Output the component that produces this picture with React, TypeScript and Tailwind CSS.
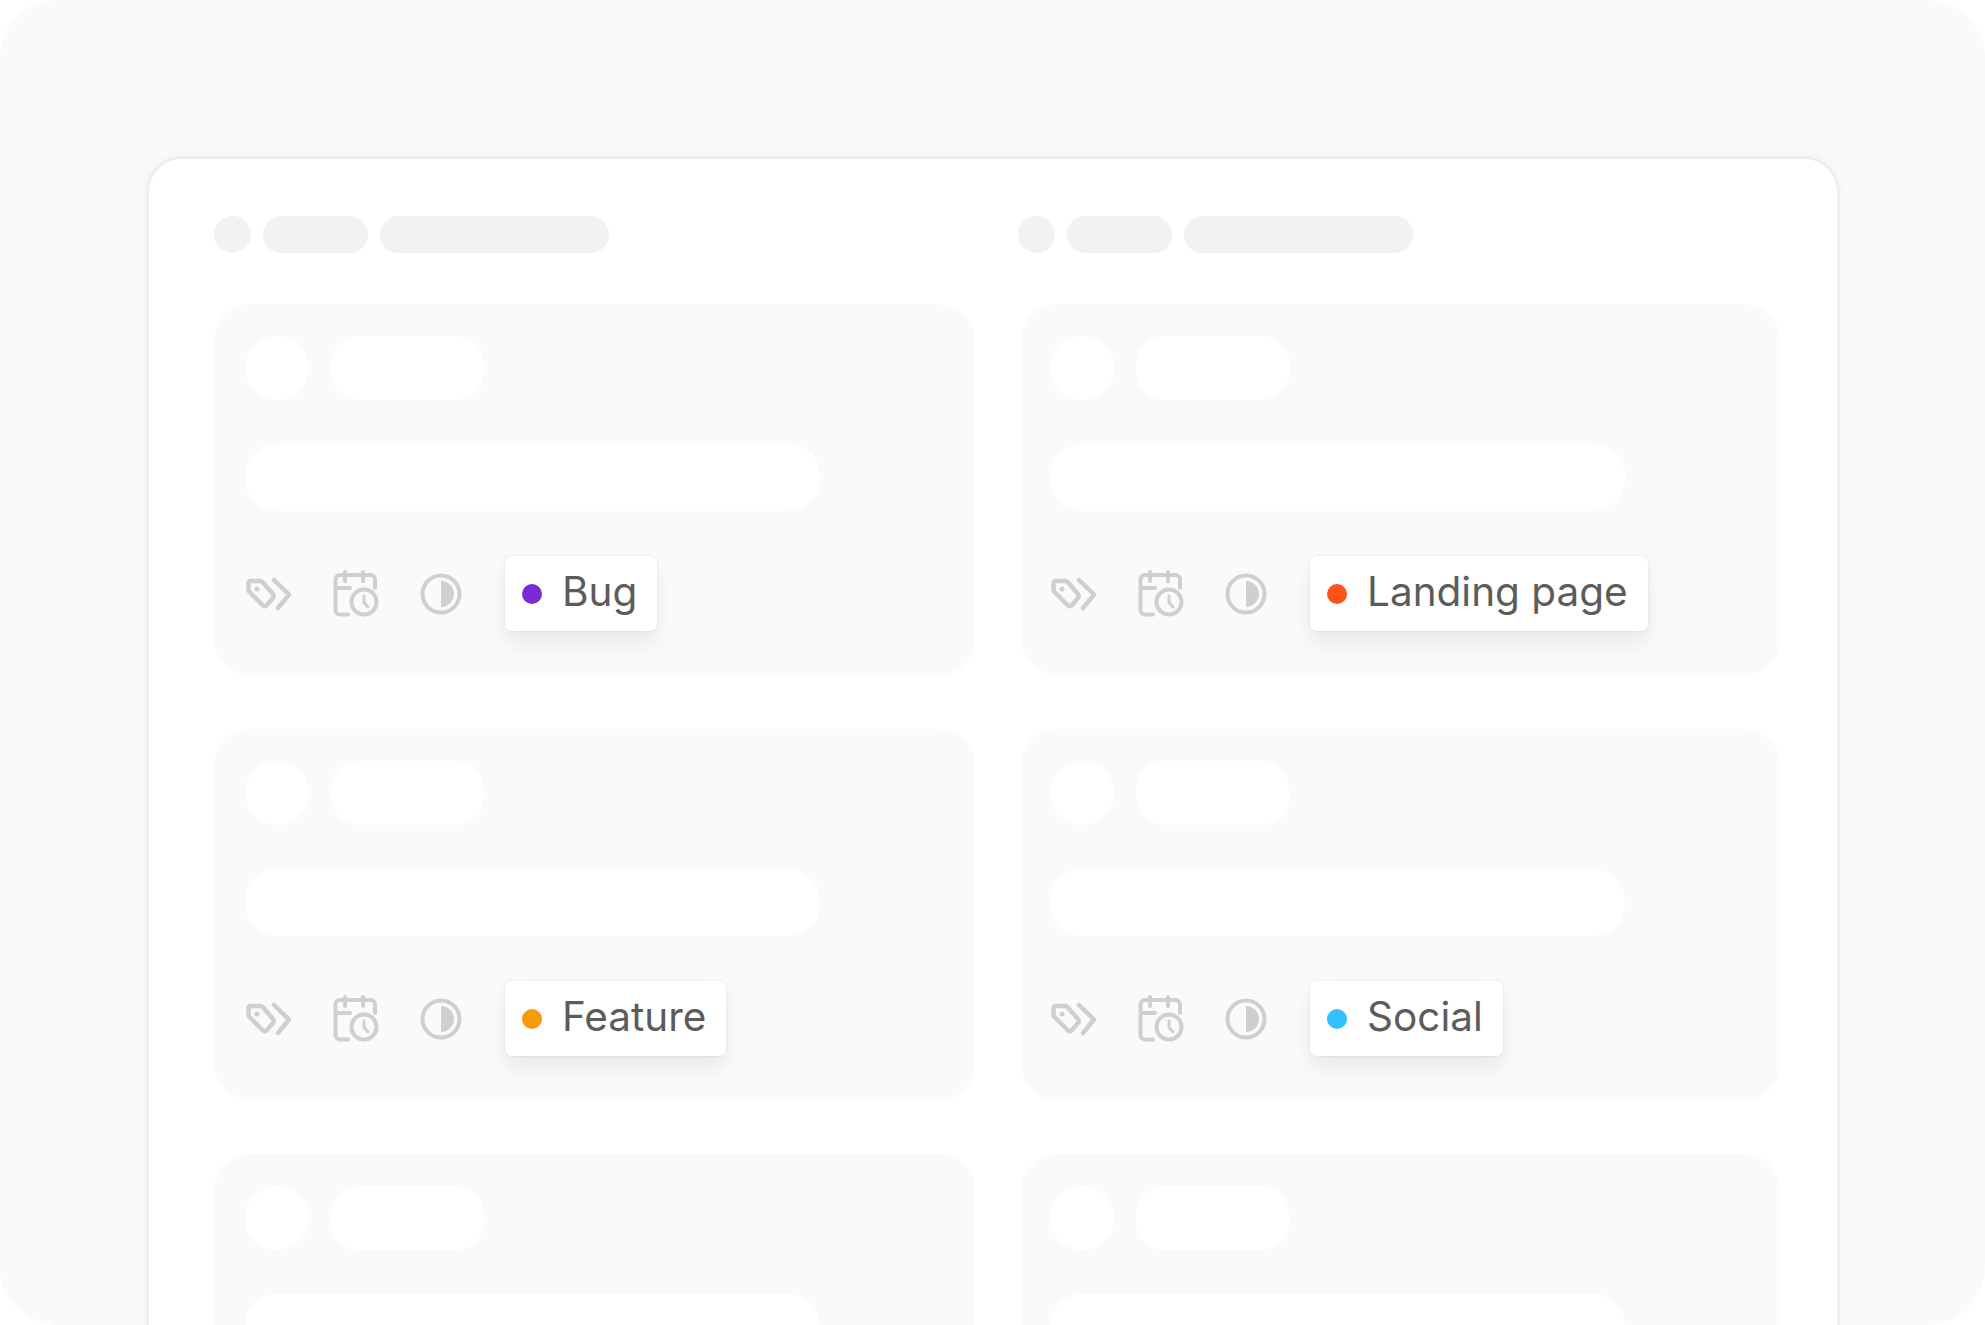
const TagsIcon = () => (
  <svg width="48" height="48" viewBox="0 0 48 48" fill="none" stroke="#cfcfcf" strokeWidth="4.500" strokeLinecap="round" strokeLinejoin="round" className="shrink-0">
    <path d="M3.500 13C3.500 11.800 4.500 11 5.500 11H15C16 11 17 11.500 17.500 12L28 24C29 25 29 27 28 28L22 35C21 36.500 19 36.500 18 35.500L4.500 22C4 21.500 3.500 20.500 3.500 19.500V13Z" />
    <path d="M29 10L44 24.500L33 38" />
    <circle cx="12" cy="19" r="2.500" fill="#cfcfcf" stroke="none" />
  </svg>
);

const CalendarClockIcon = () => (
  <svg width="48" height="48" viewBox="0 0 48 48" fill="none" stroke="#cfcfcf" strokeWidth="4" strokeLinecap="round" strokeLinejoin="round" className="shrink-0">
    <path d="M44 18V9.500C44 7 42 5 39.500 5H9C6.500 5 4.500 7 4.500 9.500V40C4.500 42.500 6.500 44.500 9 44.500H17" />
    <path d="M14 2V11M32 2V11M5 18H19" />
    <circle cx="33" cy="32" r="12.500" />
    <path d="M33 26V32.500L37 37" strokeWidth="3" />
  </svg>
);

const ContrastIcon = () => (
  <svg width="48" height="48" viewBox="0 0 48 48" fill="none" className="shrink-0">
    <circle cx="24" cy="24" r="18.500" stroke="#cfcfcf" strokeWidth="4" />
    <path d="M24 11C31.200 11 37 16.800 37 24C37 31.200 31.200 37 24 37V11Z" fill="#cfcfcf" />
  </svg>
);

function Card({ label, dot, right }: { label: string; dot: string; right?: boolean }) {
  return (
    <div className={`h-[371px] rounded-[36px] bg-[#fafafa] pt-[32px] ${right ? "pl-[29px]" : "pl-[31px]"}`}>
      <div className="flex gap-[22px]">
        <div className="size-[64px] rounded-full bg-white" />
        <div className="h-[64px] w-[153px] rounded-[28px] bg-white" />
      </div>
      <div className="mt-[44px] h-[67px] w-[575px] rounded-[32px] bg-white" />
      <div className="mt-[45px] flex items-center gap-[38px]">
        <TagsIcon />
        <CalendarClockIcon />
        <ContrastIcon />
        <div className="ml-[2px] flex h-[75px] items-center gap-[20px] rounded-[7px] bg-white pb-[3px] pl-[17px] pr-[20px] shadow-[0_0_3px_rgba(0,0,0,0.09),0_12px_20px_rgba(0,0,0,0.07)]">
          <span className={`mt-[3px] size-[20px] rounded-full ${dot}`} />
          <span className="font-['Inter',sans-serif] text-[40.500px] leading-none text-[#5c5c5c]">{label}</span>
        </div>
      </div>
    </div>
  );
}

function Header() {
  return (
    <div className="mb-[51px] flex gap-[12px]">
      <div className="size-[37px] rounded-full bg-[#f2f2f2]" />
      <div className="h-[37px] w-[105px] rounded-full bg-[#f2f2f2]" />
      <div className="h-[37px] w-[229px] rounded-full bg-[#f2f2f2]" />
    </div>
  );
}

export default function App() {
  return (
    <div className="h-[1325px] w-[1985px] overflow-hidden bg-white">
      <div className="h-full overflow-hidden rounded-[58px] bg-[#fafafa] pl-[146px] pr-[145px] pt-[156px]">
        <div className="h-[1300px] rounded-t-[36px] border-[3px] border-[#eeeeee] bg-white pl-[65px] pr-[56px] pt-[57px] shadow-[0_0_14px_rgba(0,0,0,0.03)]">
          <div className="grid grid-cols-[761px_759px] gap-x-[46px]">
            <div>
              <Header />
              <div className="flex flex-col gap-[54px]">
                <Card label="Bug" dot="bg-[#7c2bd1]" />
                <Card label="Feature" dot="bg-[#f99a0b]" />
                <Card label="" dot="hidden" />
              </div>
            </div>
            <div>
              <div className="-ml-[3px]">
                <Header />
              </div>
              <div className="flex flex-col gap-[54px]">
                <Card right label="Landing page" dot="bg-[#fc5316]" />
                <Card right label="Social" dot="bg-[#35c0fd]" />
                <Card right label="" dot="hidden" />
              </div>
            </div>
          </div>
        </div>
      </div>
    </div>
  );
}
